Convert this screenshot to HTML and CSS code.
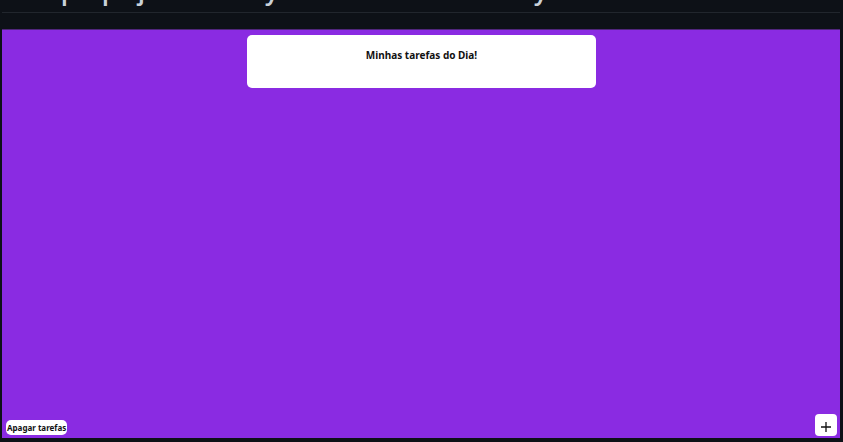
FILE: index.html
```html
<!DOCTYPE html>
<html lang="pt-BR">
<head>
<meta charset="utf-8">
<meta name="viewport" content="width=device-width, initial-scale=1">
<title>Minhas tarefas do Dia!</title>
<link rel="stylesheet" href="styles.css">
</head>
<body>
<header class="heading"><span>p</span><span>p</span><span>j</span><span>y</span><span>y</span></header>
<main class="board">
  <section class="card"><h1 class="title">Minhas tarefas do Dia!</h1></section>
  <footer class="actions">
    <button class="clear" type="button">Apagar tarefas</button>
    <button class="add" type="button" aria-label="Adicionar tarefa">
      <svg class="plus" viewBox="0 0 12 12" aria-hidden="true"><path d="M6 1v10M1 6h10"/></svg>
    </button>
  </footer>
</main>
</body>
</html>
```
FILE: styles.css
```css
* {
  box-sizing: border-box;
}

body {
  display: flex;
  flex-direction: column;
  min-height: 100vh;
  margin: 0;
  padding: 0 3px 4px 2px;
  background: #0d1117;
  font-family: "Noto Sans", "Open Sans", sans-serif;
}

.heading {
  display: grid;
  grid-template-columns: 41px 36px 127px 269px 1fr;
  align-content: end;
  height: 13px;
  margin-bottom: 16px;
  padding: 0 0 8px 59px;
  overflow: hidden;
  border-bottom: 1px solid #21262d;
  color: #c9d1d9;
  font-size: 24px;
  font-weight: 600;
  line-height: 26px;
}

.board {
  display: flex;
  flex: 1;
  flex-direction: column;
  justify-content: space-between;
  padding: 5px 3px 2px 4px;
  border-top: 1px solid #50267c;
  background: #8a2be2;
}

.card {
  width: 42%;
  min-height: 53px;
  margin: 0 auto;
  padding-top: 12px;
  border-radius: 5px;
  background: #fff;
  text-align: center;
}

.title {
  margin: 0;
  color: #111;
  font-size: 10px;
  font-weight: 700;
  line-height: 16px;
}

.actions {
  display: flex;
  align-items: flex-end;
  justify-content: space-between;
}

button {
  border: 0;
  background: #fff;
  color: #111;
  font-family: inherit;
}

.clear {
  margin-bottom: 1px;
  padding: 0 1px;
  border-radius: 5px;
  font-size: 8px;
  font-weight: 700;
  line-height: 15px;
}

.add {
  display: grid;
  place-items: end center;
  width: 22px;
  height: 22px;
  padding: 0 0 3px;
  border-radius: 4px;
}

.plus {
  width: 12px;
  height: 12px;
  fill: none;
  stroke: #111;
  stroke-width: 1.3;
}
```
